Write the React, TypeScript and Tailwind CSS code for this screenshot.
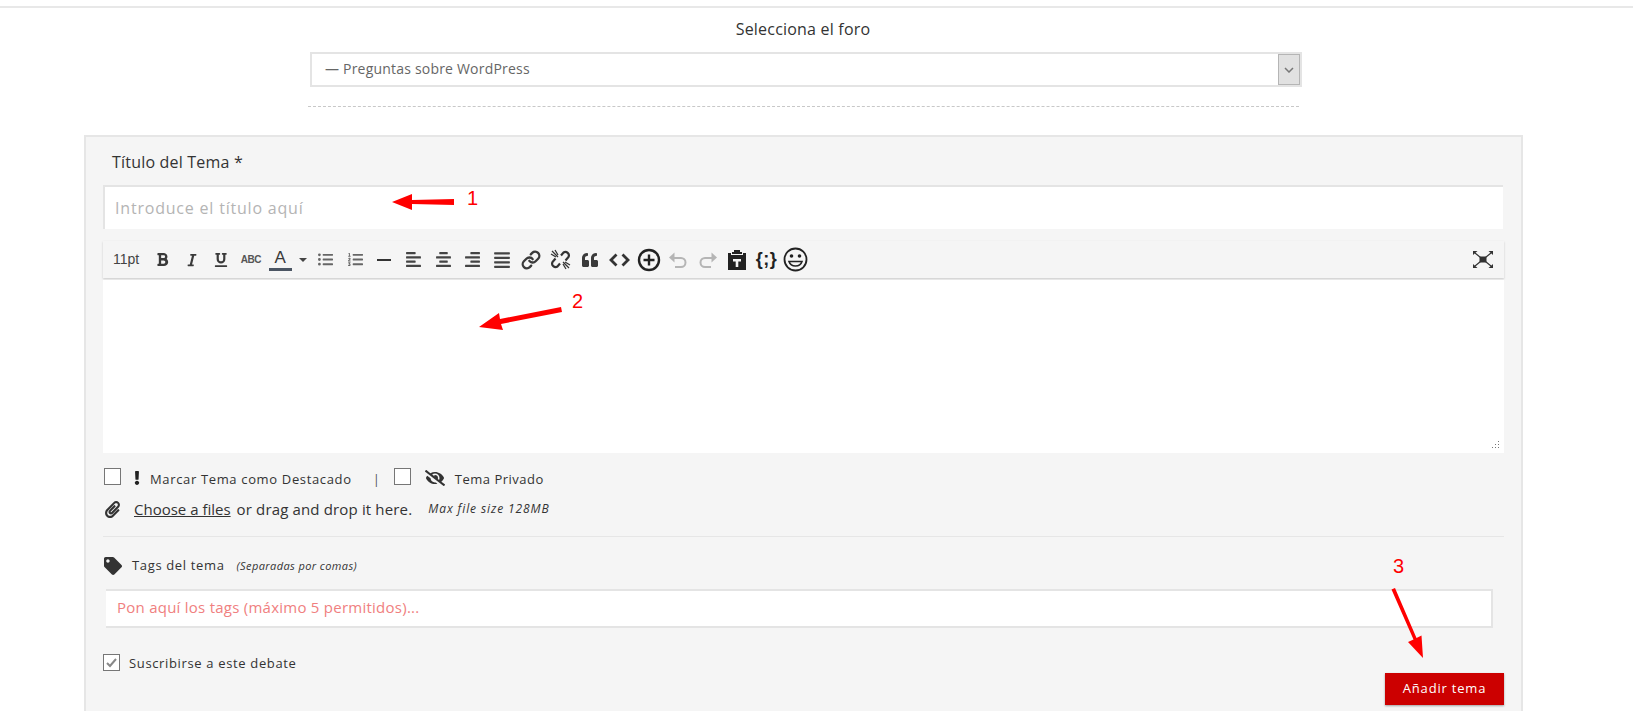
import {
  FaAlignCenter,
  FaAlignJustify,
  FaAlignLeft,
  FaAlignRight,
  FaBold,
  FaExclamation,
  FaEyeSlash,
  FaItalic,
  FaListOl,
  FaListUl,
  FaPaperclip,
  FaQuoteLeft,
  FaTag,
  FaUnderline,
} from "react-icons/fa";
import { Link } from "lucide-react";
import type { ReactNode } from "react";

const font = "font-['Open_Sans',sans-serif]";

function ToolButton({ children }: { children: ReactNode }) {
  return (
    <div className="flex h-full w-[29.4px] shrink-0 items-center justify-center text-[#3a3a3a]">
      {children}
    </div>
  );
}

function Box({ checked }: { checked?: boolean }) {
  return (
    <span className="flex h-[17px] w-[17px] shrink-0 items-center justify-center border border-[#767676] bg-white">
      {checked && (
        <svg width="13" height="13" viewBox="0 0 13 13" fill="none" stroke="#888" strokeWidth="2">
          <path d="M2 7l3 3 6-7" />
        </svg>
      )}
    </span>
  );
}

function Toolbar() {
  return (
    <div className="flex h-[37px] items-center bg-[#f5f5f5] pl-[10px] shadow-[0_1px_2px_rgba(0,0,0,0.18)]">
      <div className="w-[35px] shrink-0 font-['Liberation_Sans',sans-serif] text-[14px] text-[#444]">11pt</div>
      <ToolButton><FaBold size={15} /></ToolButton>
      <ToolButton><FaItalic size={14} /></ToolButton>
      <ToolButton><FaUnderline size={14} /></ToolButton>
      <ToolButton>
        <span className="font-['Liberation_Sans',sans-serif] text-[10px] font-bold tracking-[-0.5px] text-[#555]">ABC</span>
      </ToolButton>
      <ToolButton>
        <div className="flex flex-col items-center">
          <span className="font-['Liberation_Sans',sans-serif] text-[17px] leading-[18px]">A</span>
          <span className="mt-[1px] h-[3px] w-[23px] bg-[#4b5563]" />
        </div>
      </ToolButton>
      <div className="flex w-[16px] shrink-0 justify-center">
        <span className="border-x-[4px] border-t-[4px] border-x-transparent border-t-[#444]" />
      </div>
      <ToolButton><FaListUl size={15} className="text-[#666]" /></ToolButton>
      <ToolButton><FaListOl size={15} className="text-[#666]" /></ToolButton>
      <ToolButton><span className="h-[2px] w-[14px] bg-[#333]" /></ToolButton>
      <ToolButton><FaAlignLeft size={17} className="text-[#444]" /></ToolButton>
      <ToolButton><FaAlignCenter size={17} className="text-[#444]" /></ToolButton>
      <ToolButton><FaAlignRight size={17} className="text-[#444]" /></ToolButton>
      <ToolButton><FaAlignJustify size={18} className="text-[#444]" /></ToolButton>
      <ToolButton><Link size={20} strokeWidth={2.8} /></ToolButton>
      <ToolButton>
        <svg width="21" height="21" viewBox="0 0 21 21" fill="none" stroke="#333" strokeWidth="2.2">
          <path d="M11 6.500l2.500-3a3.500 3.500 0 0 1 5 4.500l-3 3.500" />
          <path d="M10 14.500l-2.500 3a3.500 3.500 0 0 1-5-4.500l3-3.500" />
          <path d="M2 2l6 6M5 1l3 5M1 5l5 3M19 19l-6-6M16 20l-3-5M20 16l-5-3" strokeWidth="1.300" />
        </svg>
      </ToolButton>
      <ToolButton><FaQuoteLeft size={16} /></ToolButton>
      <ToolButton>
        <svg width="21" height="14" viewBox="0 0 21 14" fill="none" stroke="#333" strokeWidth="2.8">
          <path d="M7.500 1.500L2 7l5.500 5.500M13.500 1.500L19 7l-5.500 5.500" />
        </svg>
      </ToolButton>
      <ToolButton>
        <svg width="24" height="24" viewBox="0 0 24 24" fill="none" stroke="#222" strokeWidth="2.4">
          <circle cx="12" cy="12" r="10" />
          <path d="M12 6.500v11M6.500 12h11" />
        </svg>
      </ToolButton>
      <ToolButton>
        <svg width="20" height="18" viewBox="0 0 20 18" fill="none" stroke="#b5b5b5" strokeWidth="2">
          <path d="M6 7h7a4.500 4.500 0 0 1 0 9H7" />
          <path d="M6.500 1.500v10L1 6.500z" fill="#b5b5b5" stroke="none" />
        </svg>
      </ToolButton>
      <ToolButton>
        <svg width="20" height="18" viewBox="0 0 20 18" fill="none" stroke="#b5b5b5" strokeWidth="2">
          <path d="M14 7H7a4.500 4.500 0 0 0 0 9h6" />
          <path d="M13.500 1.500v10L19 6.500z" fill="#b5b5b5" stroke="none" />
        </svg>
      </ToolButton>
      <ToolButton>
        <svg width="18" height="20" viewBox="0 0 18 20" fill="#222">
          <path d="M6 0h6v2h2v2H4V2h2zM0 3h3v2h12V3h3v17H0z" />
          <path d="M5 9h8v2.500h-2.700V17H7.700v-5.500H5z" fill="#f5f5f5" />
        </svg>
      </ToolButton>
      <ToolButton>
        <span className="font-['Liberation_Sans',sans-serif] text-[18px] font-bold tracking-[0.5px] text-[#222]">{"{;}"}</span>
      </ToolButton>
      <ToolButton>
        <svg width="25" height="25" viewBox="0 0 25 25" fill="none" stroke="#222" strokeWidth="1.800">
          <circle cx="12.500" cy="12.500" r="11" />
          <circle cx="8.500" cy="9" r="1.800" fill="#222" stroke="none" />
          <circle cx="16.500" cy="9" r="1.800" fill="#222" stroke="none" />
          <path d="M6 14.500c2 6 11 6 13 0z" strokeWidth="1.600" />
        </svg>
      </ToolButton>
      <div className="ml-auto pr-[11px]">
        <svg width="20" height="17" viewBox="0 0 20 17" fill="#333" stroke="#333">
          <rect x="7" y="6" width="6" height="5" />
          <path d="M2 2l16 13M18 2L2 15" strokeWidth="1.200" />
          <path d="M0 0h4.500L0 4zM20 0h-4.500L20 4zM0 17h4.500L0 13zM20 17h-4.500L20 13z" stroke="none" />
        </svg>
      </div>
    </div>
  );
}

function Annotations() {
  return (
    <>
      <svg className="pointer-events-none absolute left-0 top-0" width="1633" height="711">
        <g fill="#ff0000" stroke="none">
          <path d="M392 202l20-8v6l42-1v6l-42-1v6z" />
          <path d="M479 327l20-14 1 6 61-12 1 5-61 12 2 6z" />
          <path d="M1423 658l-15-16 5.500-2.500-22-50 3.500-1.500 21.500 50 5-2.500z" />
        </g>
      </svg>
      <span className="absolute left-[467px] top-[186px] font-['Liberation_Sans',sans-serif] text-[20px] leading-6 text-[#ff0000]">1</span>
      <span className="absolute left-[572px] top-[289px] font-['Liberation_Sans',sans-serif] text-[20px] leading-6 text-[#ff0000]">2</span>
      <span className="absolute left-[1393px] top-[554px] font-['Liberation_Sans',sans-serif] text-[20px] leading-6 text-[#ff0000]">3</span>
    </>
  );
}

export default function App() {
  return (
    <div className={`relative h-[711px] w-full overflow-hidden bg-white ${font} text-[#333]`}>
      <div className="mt-[6px] h-[2px] bg-[#e8e8e8]" />
      <div className="mt-[11px] w-[1606px] text-center text-[16px] leading-5 tracking-[0.2px]">Selecciona el foro</div>

      <div className="mt-[13px] ml-[310px] flex h-[35px] w-[992px] items-center border-2 border-[#e4e4e4] bg-white">
        <span className="flex-1 pb-[2px] pl-[13px] text-[14px] tracking-[0.2px] text-[#666]">— Preguntas sobre WordPress</span>
        <span className="flex h-full w-[22px] items-center justify-center border border-[#b5b5b5] bg-[#e1e1e1]">
          <svg width="10" height="6" viewBox="0 0 10 6" fill="none" stroke="#777" strokeWidth="1.500">
            <path d="M1 1l4 4 4-4" />
          </svg>
        </span>
      </div>
      <div className="mt-[19px] ml-[308px] w-[991px] border-t border-dashed border-[#c8c8c8]" />

      <div className="mt-[28px] ml-[84px] flex h-[600px] w-[1439px] flex-col border-2 border-[#e6e6e6] bg-[#f5f5f5] px-[17px] pt-[15px]">
        <div className="ml-[9px] text-[16px] leading-5 tracking-[0.2px]">Título del Tema *</div>
        <input
          readOnly
          placeholder="Introduce el título aquí"
          className="mt-[13px] h-[44px] w-[1400px] shrink-0 border-t-2 border-l-2 border-[#e4e4e4] bg-white pl-[10px] text-[16px] tracking-[0.8px] outline-none placeholder:text-[#b4b4b4]"
        />
        <div className="mt-[12px]"><Toolbar /></div>
        <div className="relative mt-[2px] h-[173px] bg-white">
          <svg className="absolute bottom-[3px] right-[4px]" width="10" height="10" viewBox="0 0 10 10" fill="#777">
            <path d="M8 1h1v1H8zM5 4h1v1H5zM8 4h1v1H8zM2 7h1v1H2zM5 7h1v1H5zM8 7h1v1H8z" />
          </svg>
        </div>

        <div className="mt-[15px] flex h-5 items-center text-[13px]">
          <span className="mb-[3px] ml-[1px]"><Box /></span>
          <FaExclamation size={14} className="ml-[9px] text-[#222]" />
          <span className="mt-[3px] ml-[6px] tracking-[0.65px]">Marcar Tema como Destacado</span>
          <span className="mt-[3px] ml-[21px] text-[#555]">|</span>
          <span className="mb-[3px] ml-[14px]"><Box /></span>
          <FaEyeSlash size={20} className="ml-[14px] text-[#333]" />
          <span className="mt-[3px] ml-[10px] tracking-[0.5px]">Tema Privado</span>
        </div>
        <div className="mt-[11px] flex h-5 items-center">
          <FaPaperclip size={17} className="ml-[1px] text-[#333]" />
          <span className="ml-[13px] text-[15px] underline">Choose a files</span>
          <span className="ml-[6px] text-[15px] tracking-[0.15px]">or drag and drop it here.</span>
          <span className="ml-[16px] text-[12px] tracking-[0.9px] italic">Max file size 128MB</span>
        </div>
        <div className="mt-[17px] h-px bg-[#e6e6e6]" />
        <div className="mt-[19px] flex h-5 items-center">
          <FaTag size={18} className="ml-[1px] text-[#333]" />
          <span className="ml-[10px] text-[13px] tracking-[0.65px]">Tags del tema</span>
          <span className="ml-[12px] text-[11px] tracking-[0.4px] italic">(Separadas por comas)</span>
        </div>
        <div className="mt-[13px] mr-[11px] ml-[3px] flex h-[39px] shrink-0 border-2 border-l-0 border-[#e4e4e4] bg-white">
          <input
            readOnly
            placeholder="Pon aquí los tags (máximo 5 permitidos)..."
            className="w-full pb-[3px] pl-[11px] text-[15px] tracking-[0.25px] outline-none placeholder:text-[#f08080]"
          />
        </div>
        <div className="mt-[26px] flex h-4 items-center text-[13px]">
          <Box checked />
          <span className="mt-[4px] ml-[9px] tracking-[0.65px]">Suscribirse a este debate</span>
        </div>
        <button className="mt-[3px] h-[32px] w-[119px] self-end bg-[#cc0000] text-[13px] tracking-[0.8px] text-white shadow-[0_1px_2px_rgba(0,0,0,0.35)]">
          Añadir tema
        </button>
      </div>

      <Annotations />
    </div>
  );
}
